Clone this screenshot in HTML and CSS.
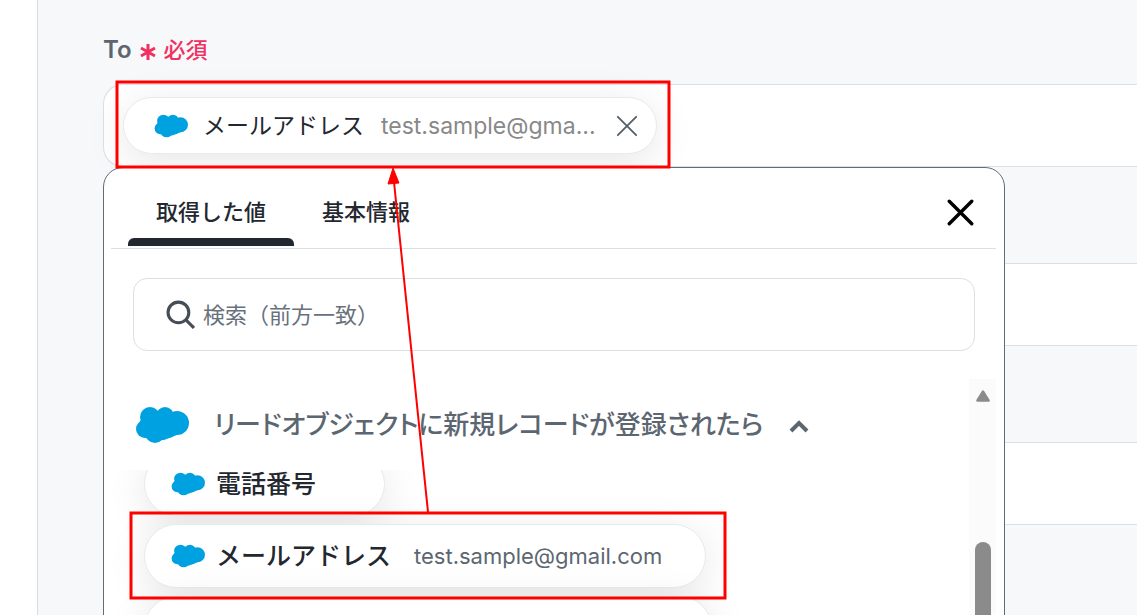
FILE: index.html
```html
<!DOCTYPE html>
<html lang="ja">

<head>
    <meta charset="UTF-8">
    <meta name="viewport" content="width=device-width, initial-scale=1.0">
    <title>メール送信</title>
    <link rel="stylesheet" href="styles.css">
</head>

<body>
    <!-- 共通アイコン -->
    <svg class="sprite" aria-hidden="true">
        <symbol id="cloud" viewBox="0 0 54 38">
            <g fill="#00a1e0">
                <circle cx="15" cy="11" r="10" />
                <circle cx="30" cy="10" r="9" />
                <circle cx="42" cy="17" r="12" />
                <circle cx="10" cy="23" r="9" />
                <circle cx="20" cy="27" r="10" />
                <circle cx="33" cy="23" r="9" />
                <path d="M4 17L12 5l11 0 14 1 11 11-4 11-7 3-8 3-14 0-8-4z" />
            </g>
        </symbol>
        <symbol id="cross" viewBox="0 0 24 24">
            <path d="M2 2l20 20M22 2L2 22" fill="none" stroke="currentColor" stroke-linecap="round" />
        </symbol>
    </svg>

    <main class="panel">
        <div class="label">
            <span>To</span>
            <svg class="asterisk" viewBox="0 0 16 16">
                <path d="M8 0v16M1 4l14 8M15 4L1 12" />
            </svg>
            <span class="required">必須</span>
        </div>

        <div class="field field-open">
            <div class="chip chip-selected">
                <svg class="cloud"><use href="#cloud" /></svg>
                <span class="chip-name">メールアドレス</span>
                <span class="chip-value">test.sample@gma...</span>
                <button class="chip-remove" type="button" aria-label="削除">
                    <svg><use href="#cross" /></svg>
                </button>
            </div>

            <section class="dropdown">
                <div class="tabs">
                    <button class="tab active" type="button">取得した値</button>
                    <button class="tab" type="button">基本情報</button>
                    <button class="close" type="button" aria-label="閉じる">
                        <svg><use href="#cross" /></svg>
                    </button>
                </div>

                <label class="search">
                    <svg viewBox="0 0 28 28">
                        <circle cx="12" cy="12" r="10" />
                        <path d="M19 19l8 8" />
                    </svg>
                    <input type="text" placeholder="検索（前方一致）" aria-label="検索">
                </label>

                <div class="result">
                    <div class="group">
                        <button class="group-title" type="button">
                            <svg class="cloud-large"><use href="#cloud" /></svg>
                            <span>リードオブジェクトに新規レコードが登録されたら</span>
                            <svg class="chevron" viewBox="0 0 20 13">
                                <path d="M2 11l8-8 8 8" />
                            </svg>
                        </button>
                        <div class="list">
                            <button class="chip" type="button">
                                <svg class="cloud"><use href="#cloud" /></svg>
                                <span class="chip-name">電話番号</span>
                            </button>
                            <button class="chip" type="button">
                                <svg class="cloud"><use href="#cloud" /></svg>
                                <span class="chip-name">メールアドレス</span>
                                <span class="chip-value">test.sample@gmail.com</span>
                            </button>
                            <button class="chip chip-wide" type="button">
                                <svg class="cloud"><use href="#cloud" /></svg>
                                <span class="chip-name">リードの状況</span>
                            </button>
                        </div>
                    </div>
                    <div class="scrollbar">
                        <svg viewBox="0 0 14 12">
                            <path d="M7 2l5 8H2z" />
                        </svg>
                        <div class="thumb"></div>
                    </div>
                </div>
            </section>
        </div>
        <div class="field"></div>
        <div class="field"></div>
    </main>

    <!-- 操作説明の赤枠と矢印 -->
    <svg class="guide" width="1143" height="615" aria-hidden="true">
        <rect x="117" y="82" width="552" height="85" />
        <rect x="131" y="513" width="594" height="85" />
        <path d="M428 512L394 182" />
        <path class="guide-head" d="M393 168l-5 16 11-1z" />
    </svg>
</body>

</html>
```

FILE: styles.css
```css
* {
    box-sizing: border-box;
    margin: 0;
    padding: 0;
}

body {
    height: 100vh;
    overflow: hidden;
    background: #fff;
    font-family: Inter, "Noto Sans CJK JP", sans-serif;
    line-height: 32px;
    color: #23272f;
}

button,
input {
    border: 0;
    background: none;
    font: inherit;
    color: inherit;
}

.sprite {
    display: none;
}

.panel {
    height: 100vh;
    margin: 0 6px 0 37px;
    padding: 32px 0 0 65px;
    overflow: hidden;
    border-left: 1px solid #d5dce3;
    background: #f6f8fa;
}

.label {
    display: flex;
    align-items: center;
    gap: 8px;
    height: 36px;
    margin-bottom: 16px;
    font-size: 24px;
    font-weight: 600;
    color: #5c6670;
}

.asterisk {
    width: 16px;
    height: 16px;
    margin-top: 4px;
    fill: none;
    stroke: #f2305f;
    stroke-width: 3;
}

.required {
    font-size: 22px;
    font-weight: 500;
    color: #f2305f;
}

.field {
    position: relative;
    display: flex;
    align-items: center;
    height: 83px;
    margin-bottom: 96px;
    padding-left: 19px;
    border: 1px solid #d9e0e6;
    border-right: 0;
    border-radius: 20px 0 0 20px;
    background: #fff;
}

.field-open {
    z-index: 1;
}

/* 値チップ */
.chip {
    display: flex;
    flex-shrink: 0;
    align-items: center;
    height: 64px;
    padding: 0 43px 0 26px;
    border: 1px solid #e6ebef;
    border-radius: 32px;
    background: #fff;
    box-shadow: 0 8px 40px rgba(0, 0, 0, 0.1);
    white-space: nowrap;
}

.cloud {
    width: 34px;
    height: 24px;
}

.chip-name {
    margin-left: 11px;
    font-size: 25px;
    font-weight: 500;
}

.chip-value {
    margin-left: 23px;
    font-size: 22px;
    color: #5c6670;
}

.chip-selected {
    height: 57px;
    padding: 0 18px 0 30px;
}

.chip-selected .chip-name {
    margin-left: 15px;
    font-size: 23px;
    font-weight: 400;
}

.chip-selected .chip-value {
    margin-left: 17px;
    font-size: 23px;
    color: #888;
}

.chip-remove {
    width: 22px;
    height: 22px;
    margin-left: 20px;
    color: #56606a;
}

.chip-remove svg,
.close svg {
    display: block;
    width: 100%;
    height: 100%;
}

.chip-remove svg {
    stroke-width: 2;
}

/* 値選択ドロップダウン */
.dropdown {
    position: absolute;
    top: 82px;
    left: -1px;
    width: 902px;
    height: 480px;
    padding: 0 8px 0 7px;
    border: 1px solid #626c76;
    border-radius: 20px;
    background: #fff;
}

.tabs {
    display: flex;
    align-items: flex-end;
    height: 81px;
    padding: 0 22px 2px 17px;
    border-bottom: 1px solid #d9e0e6;
}

.tab {
    position: relative;
    height: 68px;
    padding: 0 28px;
    font-size: 22px;
    font-weight: 500;
}

.tab.active::after {
    content: "";
    position: absolute;
    right: 0;
    bottom: 0;
    left: 0;
    height: 8px;
    border-radius: 6px 6px 0 0;
    background: #23272f;
}

.close {
    width: 27px;
    height: 27px;
    margin: 0 0 20px auto;
    color: #000;
}

.close svg {
    stroke-width: 3;
}

.search {
    display: flex;
    align-items: center;
    gap: 8px;
    height: 73px;
    margin: 29px 21px 28px 22px;
    padding-left: 32px;
    border: 1px solid #d9e0e6;
    border-radius: 14px;
}

.search svg {
    width: 29px;
    height: 29px;
    fill: none;
    stroke: #454d57;
    stroke-width: 3;
}

.search input {
    flex: 1;
    font-size: 22px;
    outline: 0;
}

.search input::placeholder {
    color: #68717c;
}

.result {
    display: flex;
    height: 260px;
}

.group {
    flex: 1;
}

.group-title {
    display: flex;
    align-items: center;
    width: 100%;
    height: 91px;
    padding-left: 24px;
    font-size: 26px;
    font-weight: 500;
    font-feature-settings: "palt";
    color: #5c6670;
}

.cloud-large {
    width: 54px;
    height: 38px;
    margin-right: 25px;
}

.chevron {
    width: 20px;
    height: 13px;
    margin: 4px 0 0 26px;
    fill: none;
    stroke: #5c6670;
    stroke-width: 4;
}

.list {
    display: flex;
    flex-direction: column;
    align-items: flex-start;
    gap: 8px;
    height: 169px;
    padding-left: 33px;
    overflow: hidden;
}

.list .chip:first-child {
    width: 241px;
    margin-top: -18px;
}

.chip-wide {
    width: 568px;
}

.scrollbar {
    display: flex;
    flex-direction: column;
    align-items: center;
    width: 27px;
    padding-top: 10px;
    background: #fbfbfb;
}

.scrollbar svg {
    flex-shrink: 0;
    width: 16px;
    height: 14px;
    fill: #8b8b8b;
    stroke: #8b8b8b;
    stroke-width: 2;
    stroke-linejoin: round;
}

.thumb {
    flex: 1;
    width: 16px;
    margin-top: 139px;
    border-radius: 8px 8px 0 0;
    background: #8b8b8b;
}

.guide {
    position: absolute;
    top: 0;
    left: 0;
    z-index: 2;
    fill: none;
    stroke: #f00;
    stroke-width: 3;
    pointer-events: none;
}

.guide path {
    stroke-width: 2;
}

.guide .guide-head {
    fill: #f00;
    stroke-width: 1;
}
```
